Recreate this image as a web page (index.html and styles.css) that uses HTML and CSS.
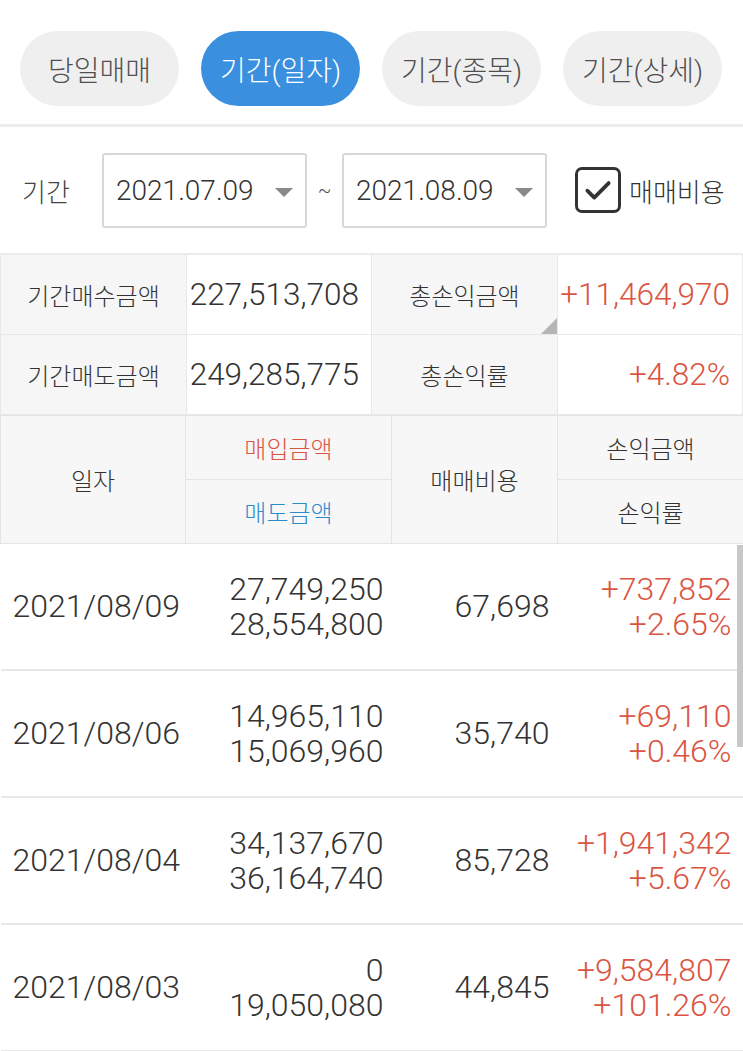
FILE: index.html
```html
<!DOCTYPE html>
<html lang="ko">
  <head>
    <meta charset="UTF-8" />
    <meta name="viewport" content="width=device-width, initial-scale=1.0" />
    <title>기간(일자)</title>
    <link rel="stylesheet" href="styles.css">
  </head>
  <body>
    <nav class="tabs">
      <button class="tab">당일매매</button>
      <button class="tab active">기간(일자)</button>
      <button class="tab">기간(종목)</button>
      <button class="tab">기간(상세)</button>
    </nav>

    <div class="filter">
      <span class="filter-label">기간</span>
      <div class="select"><span>2021.07.09</span><i class="caret"></i></div>
      <span class="tilde">~</span>
      <div class="select"><span>2021.08.09</span><i class="caret"></i></div>
      <label class="check">
        <span class="check-box">
          <svg viewBox="0 0 24 24" width="32" height="32"><path d="M4 12.5l5.2 5.2L20 6.8" fill="none" stroke="#333" stroke-width="2.8" stroke-linecap="round" stroke-linejoin="round"/></svg>
        </span>
        매매비용
      </label>
    </div>

    <table class="summary">
      <tr>
        <th>기간매수금액</th>
        <td>227,513,708</td>
        <th class="corner">총손익금액</th>
        <td class="up">+11,464,970</td>
      </tr>
      <tr>
        <th>기간매도금액</th>
        <td>249,285,775</td>
        <th>총손익률</th>
        <td class="up">+4.82%</td>
      </tr>
    </table>

    <div class="list">
      <table class="trades">
        <colgroup>
          <col class="c-date" />
          <col class="c-amount" />
          <col class="c-fee" />
          <col class="c-profit" />
        </colgroup>
        <thead>
          <tr>
            <th rowspan="2">일자</th>
            <th class="buy">매입금액</th>
            <th rowspan="2">매매비용</th>
            <th>손익금액</th>
          </tr>
          <tr>
            <th class="sell">매도금액</th>
            <th>손익률</th>
          </tr>
        </thead>
        <tbody>
          <tr>
            <td class="date">2021/08/09</td>
            <td>27,749,250<br />28,554,800</td>
            <td>67,698</td>
            <td class="up">+737,852<br />+2.65%</td>
          </tr>
          <tr>
            <td class="date">2021/08/06</td>
            <td>14,965,110<br />15,069,960</td>
            <td>35,740</td>
            <td class="up">+69,110<br />+0.46%</td>
          </tr>
          <tr>
            <td class="date">2021/08/04</td>
            <td>34,137,670<br />36,164,740</td>
            <td>85,728</td>
            <td class="up">+1,941,342<br />+5.67%</td>
          </tr>
          <tr>
            <td class="date">2021/08/03</td>
            <td>0<br />19,050,080</td>
            <td>44,845</td>
            <td class="up">+9,584,807<br />+101.26%</td>
          </tr>
        </tbody>
      </table>
      <div class="scrollbar"></div>
    </div>
  </body>
</html>
```

FILE: styles.css
```css
body {
  margin: 0;
  background-color: #fff;
  color: #333;
  font-family: Roboto, "Noto Sans CJK KR", sans-serif;
  font-weight: 300;
  width: 743px;
  overflow: hidden;
}

.tabs {
  display: flex;
  gap: 22px;
  padding: 31px 20px 18px 20px;
  border-bottom: 3px solid #ececec;
}

.tab {
  width: 159px;
  height: 75px;
  border: none;
  border-radius: 38px;
  background-color: #efefef;
  color: #505050;
  font-family: inherit;
  font-weight: 300;
  font-size: 28px;
  padding: 0;
}

.tab.active {
  background-color: #3a8fdf;
  color: #fff;
}

.filter {
  display: flex;
  align-items: center;
  height: 126px;
  padding-left: 22px;
}

.filter-label {
  font-size: 26px;
  color: #444;
  width: 80px;
}

.select {
  display: flex;
  align-items: center;
  justify-content: space-between;
  box-sizing: border-box;
  width: 205px;
  height: 75px;
  border: 2px solid #d8d8d8;
  border-radius: 3px;
  padding: 0 12px 0 12px;
  font-size: 28px;
  color: #333;
}

.caret {
  width: 0;
  height: 0;
  border-left: 9px solid transparent;
  border-right: 9px solid transparent;
  border-top: 9px solid #8a8a8a;
  margin-top: 4px;
}

.tilde {
  width: 35px;
  text-align: center;
  font-size: 20px;
  color: #555;
}

.check {
  display: flex;
  align-items: center;
  gap: 8px;
  margin-left: 28px;
  font-size: 26px;
  color: #333;
}

.check-box {
  display: flex;
  align-items: center;
  justify-content: center;
  box-sizing: border-box;
  width: 46px;
  height: 46px;
  border: 3px solid #333;
  border-radius: 7px;
}

table {
  border-collapse: collapse;
  width: 743px;
  table-layout: fixed;
}

.summary {
  border-top: 2px solid #ececec;
}

.summary th,
.summary td {
  height: 79px;
  border: 1px solid #e8e8e8;
  padding: 0;
}

.summary th {
  width: 185px;
  background-color: #f6f6f6;
  font-weight: 300;
  font-size: 24px;
  color: #333;
}

.summary td {
  background-color: #fff;
  text-align: right;
  padding-right: 12px;
  font-size: 31.5px;
  color: #333;
}

.summary th.corner {
  position: relative;
}

.summary th.corner::after {
  content: "";
  position: absolute;
  right: 0;
  bottom: 0;
  border-left: 16px solid transparent;
  border-bottom: 16px solid #b5b5b5;
}

.up {
  color: #da5441 !important;
}

.list {
  position: relative;
}

.c-date { width: 185px; }
.c-amount { width: 206px; }
.c-fee { width: 166px; }
.c-profit { width: 186px; }

.trades thead th {
  height: 63px;
  background-color: #f7f7f7;
  border: 1px solid #e4e4e4;
  font-weight: 300;
  font-size: 24px;
  color: #333;
  padding: 0;
}

.trades thead .buy {
  color: #da5441;
}

.trades thead .sell {
  color: #2b8ccb;
}

.trades tbody td {
  height: 125px;
  border-bottom: 2px solid #e8e8e8;
  text-align: right;
  font-size: 32px;
  line-height: 35px;
  color: #333;
  padding: 0 8px 0 0;
}

.trades tbody td.date {
  text-align: left;
  padding-left: 12px;
}

.trades tbody td.up {
  padding-right: 12px;
}

.scrollbar {
  position: absolute;
  right: 0;
  top: 130px;
  width: 6px;
  height: 202px;
  background-color: #c8c8c8;
}
```
